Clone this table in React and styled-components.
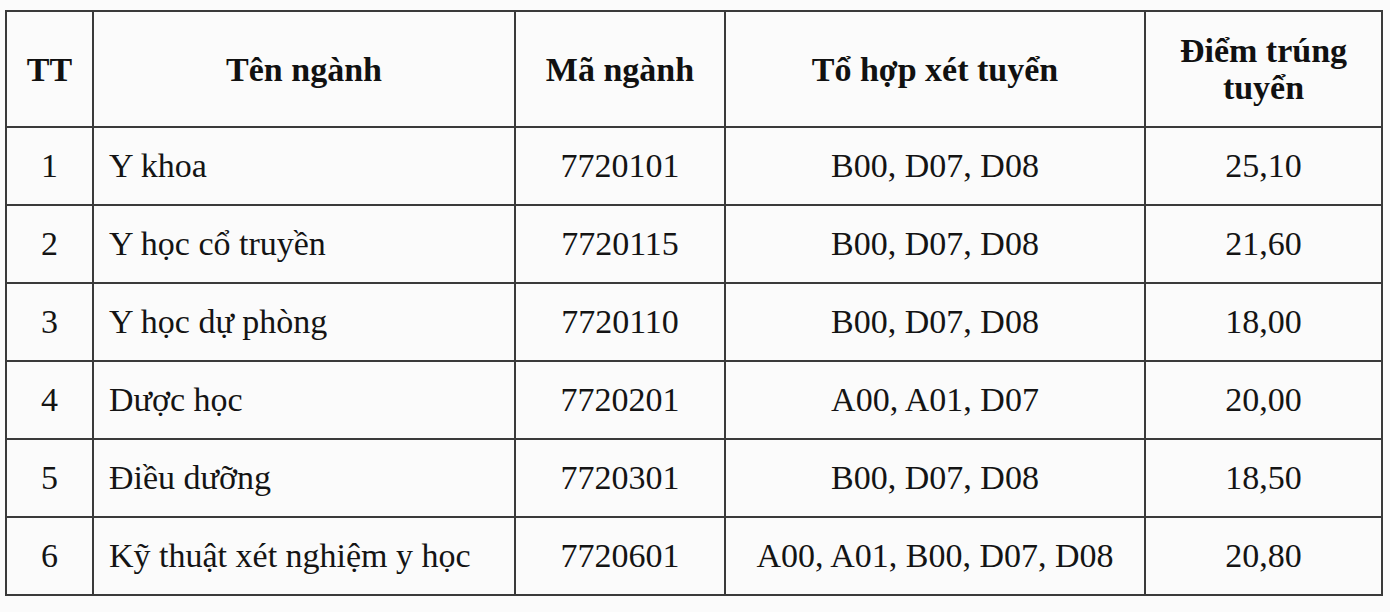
import React from 'react';
import styled, { createGlobalStyle } from 'styled-components';

const GlobalStyle = createGlobalStyle`
  html, body {
    margin: 0;
    padding: 0;
    background: #fbfbfb;
  }
  body {
    font-family: "Liberation Serif", "Times New Roman", serif;
    color: #141414;
  }
`;

const rows = [
  { tt: '1', name: 'Y khoa', code: '7720101', combo: 'B00, D07, D08', score: '25,10' },
  { tt: '2', name: 'Y học cổ truyền', code: '7720115', combo: 'B00, D07, D08', score: '21,60' },
  { tt: '3', name: 'Y học dự phòng', code: '7720110', combo: 'B00, D07, D08', score: '18,00' },
  { tt: '4', name: 'Dược học', code: '7720201', combo: 'A00, A01, D07', score: '20,00' },
  { tt: '5', name: 'Điều dưỡng', code: '7720301', combo: 'B00, D07, D08', score: '18,50' },
  { tt: '6', name: 'Kỹ thuật xét nghiệm y học', code: '7720601', combo: 'A00, A01, B00, D07, D08', score: '20,80' },
];

const Page = styled.div`
  padding: 10px 0 0 5px;
`;

const Table = styled.table`
  border-collapse: collapse;
  table-layout: fixed;
  width: 1378px;
  font-family: "Liberation Serif", "Times New Roman", serif;
  color: #141414;
`;

const HeadCell = styled.th`
  height: 114px;
  padding: 0 6px;
  border: 2px solid #3a3a3a;
  font-family: "Liberation Serif", "Times New Roman", serif;
  font-size: 34px;
  font-weight: 700;
  line-height: 37px;
  text-align: center;
  vertical-align: middle;
  color: #111;
`;

const Cell = styled.td`
  height: 76px;
  padding: ${p => (p.$left ? '0 0 0 15px' : '0')};
  border: 2px solid #3a3a3a;
  font-family: "Liberation Serif", "Times New Roman", serif;
  font-size: 34px;
  line-height: 38px;
  text-align: ${p => (p.$left ? 'left' : 'center')};
  vertical-align: middle;
  white-space: nowrap;
`;

export default function App() {
  return (
    <Page>
      <GlobalStyle />
      <Table>
        <colgroup>
          <col style={{ width: 87 }} />
          <col style={{ width: 422 }} />
          <col style={{ width: 210 }} />
          <col style={{ width: 420 }} />
          <col style={{ width: 237 }} />
        </colgroup>
        <thead>
          <tr>
            <HeadCell>TT</HeadCell>
            <HeadCell>Tên ngành</HeadCell>
            <HeadCell>Mã ngành</HeadCell>
            <HeadCell>Tổ hợp xét tuyển</HeadCell>
            <HeadCell>
              Điểm trúng
              <br />
              tuyển
            </HeadCell>
          </tr>
        </thead>
        <tbody>
          {rows.map(r => (
            <tr key={r.tt}>
              <Cell>{r.tt}</Cell>
              <Cell $left>{r.name}</Cell>
              <Cell>{r.code}</Cell>
              <Cell>{r.combo}</Cell>
              <Cell>{r.score}</Cell>
            </tr>
          ))}
        </tbody>
      </Table>
    </Page>
  );
}
